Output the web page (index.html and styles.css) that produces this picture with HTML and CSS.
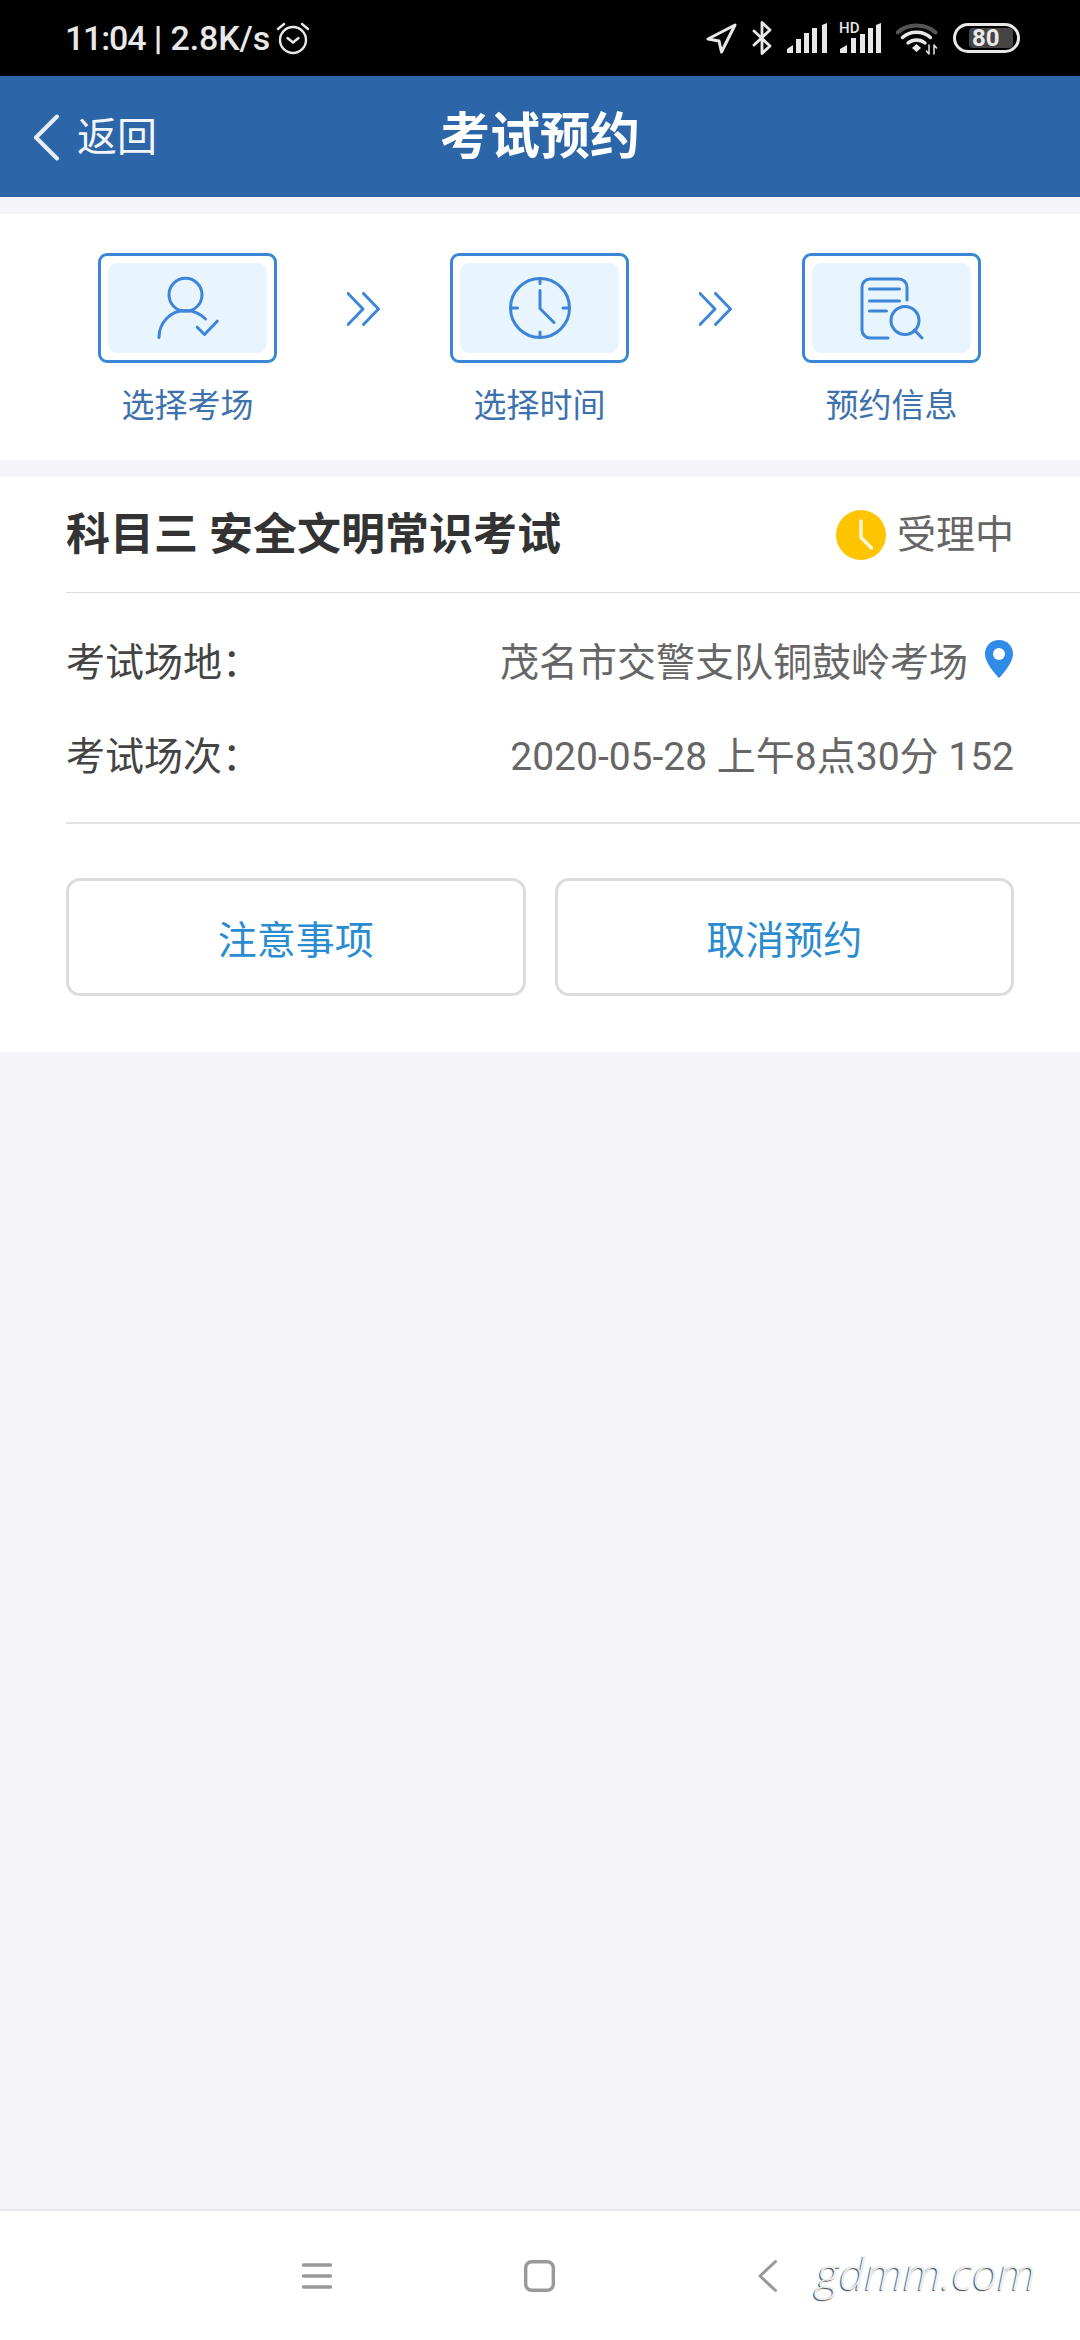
FILE: index.html
```html
<!DOCTYPE html>
<html lang="zh-CN">
<head>
    <meta charset="utf-8">
    <title>考试预约</title>
    <link rel="stylesheet" href="styles.css">
</head>
<body>
    <div class="statusbar">
        <div class="status-left">
            <span class="status-text"><span class="status-time">11:04</span> <span class="status-sep">|</span> 2.8K/s</span>
            <svg class="alarm" width="34" height="34" viewBox="0 0 34 34" fill="none" stroke="#e8e8e8" stroke-width="2.4" stroke-linecap="round" stroke-linejoin="round">
                <circle cx="17" cy="19" r="13"/>
                <path d="M11.500 17l5.500 4.500 5.500-4.500"/>
                <path d="M2 8l6-5M32 8l-6-5"/>
            </svg>
        </div>
        <div class="status-right">
            <svg width="31" height="31" viewBox="0 0 31 31" fill="none" stroke="#e8e8e8" stroke-width="3" stroke-linejoin="round">
                <path d="M29 2L2 16l11 2 2.500 11z"/>
            </svg>
            <svg width="20" height="34" viewBox="0 0 20 34" fill="none" stroke="#e8e8e8" stroke-width="2.800" stroke-linejoin="round" stroke-linecap="round">
                <path d="M2 10l16 15-8 7.500V1.500L18 9 2 24"/>
            </svg>
            <div class="signals">
                <svg width="40" height="30" viewBox="0 0 40 30" fill="#e8e8e8">
                    <path d="M0 30v-4l6-4v8z"/>
                    <rect x="9" y="16" width="5" height="14"/>
                    <rect x="17" y="10" width="5" height="20"/>
                    <rect x="25" y="5" width="5" height="25"/>
                    <path d="M35 2l5-2v30h-5z"/>
                </svg>
                <div class="signal-hd">
                    <span class="hd-text">HD</span>
                    <svg width="42" height="30" viewBox="0 0 42 30" fill="#e8e8e8">
                        <path d="M1 30v-4l7-4v8z"/>
                        <rect x="12" y="15" width="5" height="15"/>
                        <rect x="21" y="11" width="5" height="19"/>
                        <rect x="29" y="5" width="5" height="25"/>
                        <path d="M37 2l5-2v30h-5z"/>
                    </svg>
                </div>
            </div>
            <svg width="42" height="33" viewBox="0 0 42 33" fill="none" stroke-linecap="round">
                <path d="M1.500 10.500C11 1 30 1 39.500 10.500" stroke="#555" stroke-width="4"/>
                <path d="M6.500 15.500C14 8.500 27 8.500 34.500 15.500" stroke="#e8e8e8" stroke-width="3.400"/>
                <path d="M12 21C17 17 24 17 29 21" stroke="#e8e8e8" stroke-width="3.400"/>
                <path d="M20.500 22l4.500 4-4.500 4-4.500-4z" fill="#e8e8e8"/>
                <path d="M33 23v9M33 32l-2.500-3M38 32v-9M38 23l2.500 3" stroke="#e8e8e8" stroke-width="1.500"/>
            </svg>
            <div class="battery"><span class="battery-level">80</span></div>
        </div>
    </div>

    <div class="topbar">
        <div class="back">
            <svg width="27" height="47" viewBox="0 0 27 47" fill="none" stroke="#e8eef6" stroke-width="4" stroke-linecap="round" stroke-linejoin="round">
                <path d="M24 2.500L3 23.500l21 21"/>
            </svg>
            <span>返回</span>
        </div>
        <h1 class="page-title">考试预约</h1>
    </div>

    <div class="main">
        <div class="steps">
            <div class="step">
                <div class="step-box">
                    <div class="step-inner">
                        <svg width="64" height="64" viewBox="0 0 64 64" fill="none" stroke="#3d85d8" stroke-width="3" stroke-linecap="round" stroke-linejoin="round">
                            <circle cx="29.500" cy="18.800" r="16.500"/>
                            <path d="M3 61.500C3 46 15 34.500 29.500 34.500c7.500 0 14.500 3 20 8.500"/>
                            <path d="M41.200 51.200l7.300 7.300 12.700-13.300"/>
                        </svg>
                    </div>
                </div>
                <div class="step-label">选择考场</div>
            </div>
            <svg class="step-arrow" width="33" height="34" viewBox="0 0 33 34" fill="none" stroke="#3d85d8" stroke-width="3" stroke-linecap="round" stroke-linejoin="round">
                <path d="M1 1.500L16 17 1 32.500M16.500 1.500L31.500 17 16.500 32.500"/>
            </svg>
            <div class="step">
                <div class="step-box">
                    <div class="step-inner">
                        <svg width="64" height="64" viewBox="0 0 64 64" fill="none" stroke="#3d85d8" stroke-width="3" stroke-linecap="round" stroke-linejoin="round">
                            <circle cx="32" cy="32" r="29.500"/>
                            <path d="M32 14.500v18l14 14"/>
                            <path d="M32 2.500v5M2.500 32h7M32 56v5.500M55 32h6.500"/>
                        </svg>
                    </div>
                </div>
                <div class="step-label">选择时间</div>
            </div>
            <svg class="step-arrow" width="33" height="34" viewBox="0 0 33 34" fill="none" stroke="#3d85d8" stroke-width="3" stroke-linecap="round" stroke-linejoin="round">
                <path d="M1 1.500L16 17 1 32.500M16.500 1.500L31.500 17 16.500 32.500"/>
            </svg>
            <div class="step">
                <div class="step-box">
                    <div class="step-inner">
                        <svg width="64" height="64" viewBox="0 0 64 64" fill="none" stroke="#3d85d8" stroke-width="3" stroke-linecap="round" stroke-linejoin="round">
                            <path d="M47 24V11a8 8 0 0 0-8-8H10a8 8 0 0 0-8 8v43a8 8 0 0 0 8 8h18"/>
                            <path d="M9.500 13h30M9.500 25h30M9.500 35h17"/>
                            <circle cx="45" cy="44.500" r="14"/>
                            <path d="M54.500 54l7.500 8"/>
                        </svg>
                    </div>
                </div>
                <div class="step-label">预约信息</div>
            </div>
        </div>

        <div class="card">
            <div class="card-head">
                <div class="card-title">科目三 安全文明常识考试</div>
                <div class="state">
                    <svg width="50" height="50" viewBox="0 0 50 50">
                        <circle cx="25" cy="25" r="25" fill="#ffc400"/>
                        <path d="M25 11v16.500L35.500 38" fill="none" stroke="#fff6d6" stroke-width="3.500" stroke-linecap="round" stroke-linejoin="round"/>
                    </svg>
                    <span>受理中</span>
                </div>
            </div>
            <div class="info">
                <div class="info-row">
                    <span class="info-label">考试场地：</span>
                    <span class="info-value">
                        茂名市交警支队铜鼓岭考场
                        <svg class="pin" width="30" height="40" viewBox="0 0 30 40">
                            <path d="M15 1C7 1 1 7 1 15c0 10 14 24 14 24s14-14 14-24C29 7 23 1 15 1z" fill="#2e8be8"/>
                            <circle cx="15" cy="15" r="6" fill="#fff"/>
                        </svg>
                    </span>
                </div>
                <div class="info-row">
                    <span class="info-label">考试场次：</span>
                    <span class="info-value">2020-05-28 上午8点30分 152</span>
                </div>
            </div>
            <div class="actions">
                <div class="btn">注意事项</div>
                <div class="btn">取消预约</div>
            </div>
        </div>
    </div>

    <div class="navbar">
        <svg class="nav-menu" width="30" height="28" viewBox="0 0 30 28" stroke="#999" stroke-width="3.400" stroke-linecap="round">
            <path d="M1.500 3h27M1.500 14h27M1.500 25h27"/>
        </svg>
        <svg class="nav-home" width="31" height="32" viewBox="0 0 31 32" fill="none" stroke="#999" stroke-width="3.400">
            <rect x="1.700" y="1.700" width="27.600" height="28.600" rx="6"/>
        </svg>
        <svg width="19" height="32" viewBox="0 0 19 32" fill="none" stroke="#999" stroke-width="3" stroke-linecap="round" stroke-linejoin="round">
            <path d="M17.500 1.500L2 16l15.500 14.500"/>
        </svg>
        <div class="watermark">gdmm.com</div>
    </div>
</body>
</html>
```

FILE: styles.css
```css
* {
    box-sizing: border-box;
}

html, body {
    margin: 0;
    padding: 0;
}

body {
    width: 1080px;
    height: 2340px;
    display: flex;
    flex-direction: column;
    overflow: hidden;
    background-color: #f4f4f9;
    font-family: Roboto, "Noto Sans CJK SC", sans-serif;
}

/* status bar */
.statusbar {
    height: 76px;
    flex-shrink: 0;
    display: flex;
    align-items: center;
    justify-content: space-between;
    padding: 0 60px 0 65px;
    background-color: #000;
    color: #e8e8e8;
}

.status-left {
    display: flex;
    align-items: center;
    gap: 6px;
}

.status-text {
    font-size: 34px;
    font-weight: 500;
    line-height: 40px;
    letter-spacing: -0.1px;
}

.status-time {
    letter-spacing: -1.2px;
}

.status-sep {
    font-weight: 700;
}

.status-right {
    display: flex;
    align-items: center;
    gap: 15px;
}

.signals {
    display: flex;
    gap: 12px;
}

.signal-hd {
    position: relative;
    height: 30px;
}

.signal-hd svg {
    display: block;
}

.hd-text {
    position: absolute;
    left: 0;
    top: -2px;
    font-size: 15px;
    font-weight: 500;
    line-height: 15px;
}

.battery {
    width: 67px;
    height: 30px;
    padding: 2px 4px 2px 13px;
    display: flex;
    border: 3px solid #e8e8e8;
    border-radius: 15px;
}

.battery-level {
    flex: 1;
    display: flex;
    align-items: center;
    padding-left: 3px;
    background-color: #444;
    border-radius: 4px;
    font-size: 24px;
    font-weight: 700;
    line-height: 20px;
}

/* header */
.topbar {
    height: 121px;
    flex-shrink: 0;
    position: relative;
    display: flex;
    align-items: center;
    justify-content: center;
    background-color: #2d66a8;
    color: #fff;
}

.back {
    position: absolute;
    left: 33px;
    top: 38px;
    display: flex;
    align-items: center;
    gap: 17px;
    font-size: 40px;
    line-height: 47px;
    color: #f2f5fa;
}

.page-title {
    margin: 0;
    font-size: 50px;
    font-weight: 700;
    line-height: 60px;
}

/* steps */
.main {
    flex: 1;
    padding-top: 17px;
}

.steps {
    height: 246px;
    padding: 39px 99px 0 98px;
    display: flex;
    align-items: flex-start;
    justify-content: space-between;
    background-color: #fff;
}

.step {
    width: 179px;
}

.step-box {
    height: 110px;
    padding: 7px;
    border: 3px solid #3d85d8;
    border-radius: 9px;
    background-color: #fff;
}

.step-inner {
    height: 100%;
    display: flex;
    align-items: center;
    justify-content: center;
    background-color: #e8f4fe;
    border-radius: 9px;
}

.step-label {
    margin-top: 23px;
    text-align: center;
    font-size: 33px;
    line-height: 40px;
    color: #3d72ad;
}

.step-arrow {
    margin-top: 39px;
}

/* card */
.card {
    margin-top: 17px;
    height: 575px;
    background-color: #fff;
}

.card-head {
    height: 116px;
    margin-left: 66px;
    padding-right: 66px;
    display: flex;
    align-items: center;
    justify-content: space-between;
    border-bottom: 1px solid #ddd;
}

.card-title {
    font-size: 44px;
    font-weight: 700;
    line-height: 54px;
    color: #333;
}

.state {
    display: flex;
    align-items: center;
    gap: 11px;
    font-size: 39px;
    line-height: 50px;
    color: #666;
}

.info {
    margin-left: 66px;
    padding: 19px 66px 22px 0;
    border-bottom: 2px solid #e2e2e2;
}

.info-row {
    height: 94px;
    display: flex;
    align-items: center;
    justify-content: space-between;
    font-size: 39px;
}

.info-label {
    color: #444;
}

.info-value {
    display: flex;
    align-items: center;
    gap: 16px;
    color: #666;
}

.actions {
    margin-top: 54px;
    padding: 0 66px;
    display: flex;
    gap: 29px;
}

.btn {
    flex: 1;
    height: 118px;
    display: flex;
    align-items: center;
    justify-content: center;
    border: 3px solid #dcdcdc;
    border-radius: 14px;
    font-size: 39px;
    color: #2a8cd0;
}

/* bottom nav */
.navbar {
    height: 131px;
    flex-shrink: 0;
    position: relative;
    padding: 0 0 0 302px;
    display: flex;
    align-items: center;
    background-color: #fff;
    border-top: 2px solid #e8e8ea;
}

.nav-menu {
    margin-right: 192px;
}

.nav-home {
    margin-right: 203px;
}

.watermark {
    position: absolute;
    right: 44px;
    top: 34px;
    font-family: "Open Sans", sans-serif;
    font-size: 45px;
    font-style: italic;
    font-weight: 300;
    line-height: 56px;
    color: #f0f0f0;
    text-shadow: -1px 1px 1px #444;
}
```
